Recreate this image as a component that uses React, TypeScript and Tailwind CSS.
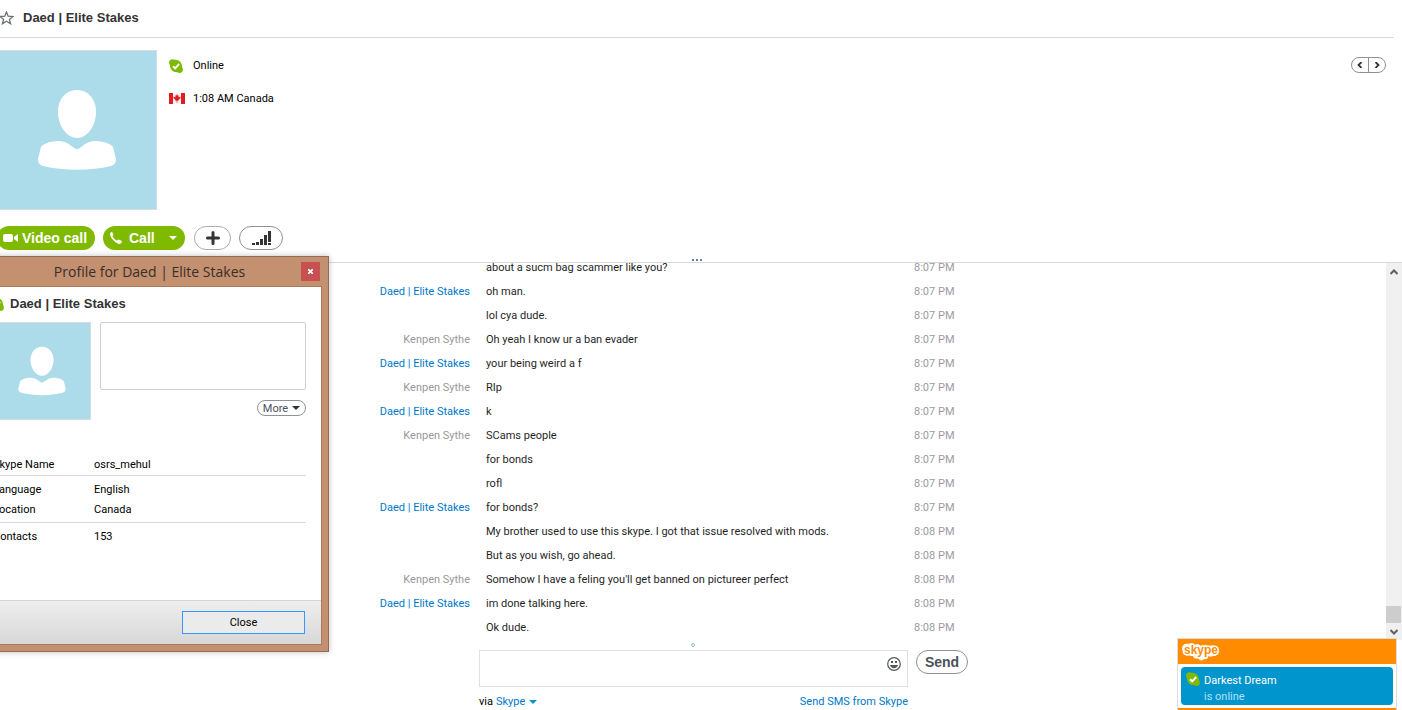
const messages = [
  { from: "", text: "about a sucm bag scammer like you?", time: "8:07 PM" },
  { from: "Daed | Elite Stakes", text: "oh man.", time: "8:07 PM" },
  { from: "", text: "lol cya dude.", time: "8:07 PM" },
  { from: "Kenpen Sythe", text: "Oh yeah I know ur a ban evader", time: "8:07 PM" },
  { from: "Daed | Elite Stakes", text: "your being weird a f", time: "8:07 PM" },
  { from: "Kenpen Sythe", text: "RIp", time: "8:07 PM" },
  { from: "Daed | Elite Stakes", text: "k", time: "8:07 PM" },
  { from: "Kenpen Sythe", text: "SCams people", time: "8:07 PM" },
  { from: "", text: "for bonds", time: "8:07 PM" },
  { from: "", text: "rofl", time: "8:07 PM" },
  { from: "Daed | Elite Stakes", text: "for bonds?", time: "8:07 PM" },
  { from: "", text: "My brother used to use this skype. I got that issue resolved with mods.", time: "8:08 PM" },
  { from: "", text: "But as you wish, go ahead.", time: "8:08 PM" },
  { from: "Kenpen Sythe", text: "Somehow I have a feling you'll get banned on pictureer perfect", time: "8:08 PM" },
  { from: "Daed | Elite Stakes", text: "im done talking here.", time: "8:08 PM" },
  { from: "", text: "Ok dude.", time: "8:08 PM" },
];

const StatusIcon = () => (
  <svg width="14" height="14" viewBox="0 0 14 14" className="shrink-0" aria-hidden="true">
    <path
      d="M0 3.600C0 1.600 1.500.2 3.600.2 4.400.2 5 .4 5.600.8 9.800.4 13.300 3.600 13 8c.9 1 1.100 2.300.9 3.200-.3 1.700-1.700 2.700-3.300 2.700-.8 0-1.500-.3-2.100-.7C4 13.700.8 10.400 1 6.200.4 5.500 0 4.600 0 3.600z"
      fill="#7fba00"
    />
    <path d="M4 7.200l2.200 2.100 4-4.300" fill="none" stroke="#fff" strokeWidth="1.900" />
  </svg>
);

const Avatar = ({ className }: { className: string }) => (
  <div className={`shrink-0 border border-[#d5dde0] bg-[#acdcea] ${className}`}>
    <svg viewBox="0 0 158 158" className="w-full h-full" role="img" aria-label="Contact picture">
      <path
        d="M79 39c11 0 19 9 19 22 0 14-9 26-19 26S60 75 60 61c0-13 8-22 19-22z"
        fill="#fff"
      />
      <path
        d="M79 98c4 0 8-8 19-8 9 0 16 4 17 6l3 12c0 4-2 6-5 7-21 5-47 5-68 0-3-1-5-3-5-7l3-12c1-2 8-6 17-6 11 0 15 8 19 8z"
        fill="#fff"
      />
    </svg>
  </div>
);

const Caret = ({ className = "" }: { className?: string }) => (
  <svg width="8" height="4" viewBox="0 0 8 4" className={className} aria-hidden="true">
    <path d="M0 0h8L4 4z" fill="currentColor" />
  </svg>
);

const Header = () => (
  <header className="mr-2 flex h-[38px] items-center gap-[9px] border-b border-[#d9d9d9] pb-[2px]">
    <button aria-label="Add to favorites">
      <svg width="15" height="14" viewBox="0 0 15 14" className="-ml-px block" aria-hidden="true">
        <path
          d="M7.500 1l1.700 4.200 4.800.3-3.600 2.900 1.200 4.400-4.100-2.500-4.100 2.500 1.200-4.400L1 5.500l4.800-.3z"
          fill="none"
          stroke="#6f7276"
          strokeWidth="1.300"
        />
      </svg>
    </button>
    <h1 className="font-['Liberation_Sans',sans-serif] text-[13px] leading-4 font-bold text-[#333]">
      Daed | Elite Stakes
    </h1>
  </header>
);

const ContactInfo = () => (
  <section className="-ml-[3px] flex items-start pt-3">
    <Avatar className="h-[160px] w-[160px]" />
    <div className="ml-3 flex flex-col gap-4 pt-[7px]">
      <p className="flex items-center gap-[10px]">
        <StatusIcon />
        Online
      </p>
      <p className="flex items-center gap-2">
        <svg width="16" height="11" viewBox="0 0 16 11" aria-hidden="true">
          <path d="M0 0h16v11H0z" fill="#f4f4f4" />
          <path d="M0 0h4v11H0zM12 0h4v11h-4z" fill="#e31b23" />
          <path
            d="M8 1l.9 1.700.9-.4-.3 2.100 1.700-.9.3 1.400-2 2 .1.900H8.300V10h-.6V7.800H6.400l.1-.9-2-2 .3-1.400 1.700.9-.3-2.100.9.4z"
            fill="#e31b23"
          />
        </svg>
        1:08 AM Canada
      </p>
    </div>
    <div className="mt-[7px] mr-4 ml-auto flex h-4 w-[35px] rounded-full border border-[#8d9297] text-[#333]">
      <button aria-label="Previous" className="flex flex-1 items-center justify-center border-r border-[#8d9297]">
        <svg width="6" height="6" viewBox="0 0 6 6" aria-hidden="true">
          <path d="M4.500 0L1.500 3l3 3" fill="none" stroke="currentColor" strokeWidth="1.800" />
        </svg>
      </button>
      <button aria-label="Next" className="flex flex-1 items-center justify-center">
        <svg width="6" height="6" viewBox="0 0 6 6" aria-hidden="true">
          <path d="M1.500 0l3 3-3 3" fill="none" stroke="currentColor" strokeWidth="1.800" />
        </svg>
      </button>
    </div>
  </section>
);

const CallBar = () => (
  <div className="-ml-[3px] flex h-[52px] items-start gap-2 pt-4 font-['Liberation_Sans',sans-serif] text-[14px] leading-4 font-bold text-white">
    <button className="flex h-6 w-[98px] items-center gap-1 rounded-full bg-[#7fba00] pl-[6px] whitespace-nowrap">
      <svg width="15" height="8" viewBox="0 0 15 8" className="shrink-0" aria-hidden="true">
        <rect width="10" height="8" rx="2" fill="#fff" />
        <path d="M11 3l4-3v8l-4-3z" fill="#fff" />
      </svg>
      Video call
    </button>
    <button className="flex h-6 w-[82px] items-center rounded-full bg-[#7fba00] pl-[7px]">
      <svg width="12" height="12" viewBox="0 0 12 12" className="mr-[7px]" aria-hidden="true">
        <path
          d="M0 1.500C0 .8.900 0 1.900 0c.6 0 1.700 2.600 1.500 3.100-.1.400-.8.900-.8 1.200 0 .8 3.200 4.200 4.300 4.200.4 0 .9-.9 1.400-.9.600 0 3.600 1.400 3.600 2 0 1-.9 2.300-2.200 2.300C6.500 11.900 0 6.500 0 1.500z"
          fill="#fff"
        />
      </svg>
      Call
      <Caret className="ml-[14px]" />
    </button>
    <button
      aria-label="Add people"
      className="ml-px flex h-6 w-[37px] items-center justify-center rounded-full border border-[#a9adb1]"
    >
      <svg width="14" height="14" viewBox="0 0 14 14" aria-hidden="true">
        <path d="M7 1.500v11M1.500 7h11" stroke="#333438" strokeWidth="3" strokeLinecap="round" />
      </svg>
    </button>
    <button
      aria-label="Call quality"
      className="flex h-6 w-11 items-center justify-center rounded-full border border-[#8d9297]"
    >
      <svg width="19" height="14" viewBox="0 0 19 14" aria-hidden="true">
        <path
          d="M0 12h3v2H0zM4 11h3v3H4zM8 8h3v6H8zM12 4h3v10h-3zM16 0h3v11h-3zM16 12h3v2h-3z"
          fill="#333438"
        />
      </svg>
    </button>
  </div>
);

const ScrollBar = () => (
  <div className="flex w-4 shrink-0 flex-col bg-[#f0f0f0] text-[#606060]">
    <button aria-label="Scroll up" className="flex h-[17px] items-center justify-center">
      <svg width="8" height="6" viewBox="0 0 8 6" aria-hidden="true">
        <path d="M.5 5L4 1.500 7.500 5" fill="none" stroke="currentColor" strokeWidth="2" />
      </svg>
    </button>
    <div className="mt-auto mr-px h-[17px] bg-[#cdcdcd]" />
    <button aria-label="Scroll down" className="flex h-[17px] items-center justify-center">
      <svg width="8" height="6" viewBox="0 0 8 6" aria-hidden="true">
        <path d="M.5 1L4 4.500 7.500 1" fill="none" stroke="currentColor" strokeWidth="2" />
      </svg>
    </button>
  </div>
);

const ChatLog = () => (
  <section className="relative flex border-t border-[#d9d9d9]">
    <div className="absolute -top-1 left-[692px] flex gap-[2px]">
      <span className="h-[2px] w-[2px] bg-[#5f7fae]" />
      <span className="h-[2px] w-[2px] bg-[#5f7fae]" />
      <span className="h-[2px] w-[2px] bg-[#5f7fae]" />
    </div>
    <div className="flex-1 overflow-hidden">
      <ul className="-mt-[7px]">
        {messages.map((item, idx) => (
          <li
            key={idx}
            className="grid h-6 grid-cols-[470px_minmax(0,412px)_1fr] items-center gap-x-4 leading-4"
          >
            <span
              className={`text-right ${item.from === "Kenpen Sythe" ? "text-[#999]" : "text-[#0078ca]"}`}
            >
              {item.from}
            </span>
            <span className="whitespace-nowrap text-[#1f1f1f]">{item.text}</span>
            <time className="text-[#9b9ba3]">{item.time}</time>
          </li>
        ))}
      </ul>
    </div>
    <ScrollBar />
  </section>
);

const Composer = () => (
  <form className="flex items-start gap-2 pt-[10px] pl-[479px]">
    <div className="relative w-[429px]">
      <span className="absolute -top-[7px] left-[212px] h-1 w-1 rounded-full border border-[#8fbccb]" />
      <textarea
        aria-label="Message"
        className="block h-[37px] w-full resize-none border border-[#e0e0e0] pr-8 pl-2 outline-none"
      />
      <button type="button" aria-label="Emoticons" className="absolute top-[7px] right-[7px]">
        <svg width="14" height="14" viewBox="0 0 14 14" className="block" aria-hidden="true">
          <circle cx="7" cy="7" r="6.300" fill="none" stroke="#55585c" strokeWidth="1.200" />
          <path d="M4 4h2v2H4zM8 4h2v2H8zM3 8h8c-.3 2-2 3.200-4 3.200S3.300 10 3 8z" fill="#55585c" />
        </svg>
      </button>
      <div className="flex items-center justify-between pt-[6px]">
        <div className="flex items-center gap-[3px]">
          <label htmlFor="via" className="text-black">
            via
          </label>
          <span className="flex items-center gap-1 text-[#0078ca]">
            <select id="via" className="field-sizing-content appearance-none">
              <option>Skype</option>
            </select>
            <Caret className="text-[#0095cc]" />
          </span>
        </div>
        <a href="#sms" className="text-[#0078ca]">
          Send SMS from Skype
        </a>
      </div>
    </div>
    <button
      type="button"
      className="h-6 w-[52px] rounded-full border border-[#8d9297] font-['Liberation_Sans',sans-serif] text-[14px] leading-4 font-bold text-[#4a525a]"
    >
      Send
    </button>
  </form>
);

const ProfileDialog = () => (
  <div
    role="dialog"
    aria-label="Profile for Daed | Elite Stakes"
    className="absolute top-[256px] -left-[30px] w-[359px] border border-[#8f6d56] bg-[#c39070] px-[6px] pb-[6px] shadow-[0_0_6px_rgba(0,0,0,0.25)]"
  >
    <div className="relative flex h-[29px] items-center justify-center">
      <h2 className="font-['Open_Sans',sans-serif] text-[14px] leading-4 text-[#3a2e27]">
        Profile for Daed | Elite Stakes
      </h2>
      <button
        aria-label="Close window"
        className="absolute top-[5px] right-[2px] flex h-[19px] w-[19px] items-center justify-center bg-[#c75050]"
      >
        <svg width="5" height="5" viewBox="0 0 5 5" aria-hidden="true">
          <path d="M0 0l5 5M5 0L0 5" stroke="#fff" strokeWidth="1.600" />
        </svg>
      </button>
    </div>
    <div className="border border-[#a87a5e] bg-white">
      <div className="px-[15px] pt-[9px]">
        <div className="-ml-[3px] flex h-4 items-center gap-[6px]">
          <StatusIcon />
          <h3 className="font-['Liberation_Sans',sans-serif] text-[13px] leading-4 font-bold text-[#333]">
            Daed | Elite Stakes
          </h3>
        </div>
        <div className="mt-[10px] flex items-start justify-between">
          <Avatar className="h-[98px] w-[98px]" />
          <div className="flex flex-col items-end">
            <textarea
              aria-label="Mood message"
              className="block h-[68px] w-[206px] resize-none rounded-xs border border-[#d0d0d0]"
            />
            <button className="mt-[10px] flex h-4 w-[49px] items-center justify-center gap-1 rounded-full border border-[#8d9297] text-[#4a525a]">
              More
              <Caret className="text-[#333]" />
            </button>
          </div>
        </div>
        <dl className="mt-[30px] grid grid-cols-[101px_1fr] pb-[53px] leading-5">
          <dt className="border-b border-[#d9d9d9] pt-[5px]">Skype Name</dt>
          <dd className="border-b border-[#d9d9d9] pt-[5px]">osrs_mehul</dd>
          <dt className="pt-1">Language</dt>
          <dd className="pt-1">English</dd>
          <dt className="border-b border-[#d9d9d9] pb-[2px]">Location</dt>
          <dd className="border-b border-[#d9d9d9] pb-[2px]">Canada</dd>
          <dt className="pt-1">Contacts</dt>
          <dd className="pt-1">153</dd>
        </dl>
      </div>
      <div className="flex h-[44px] items-center justify-end border-t border-[#d5d5d5] bg-linear-to-b from-[#eeeeee] to-[#d8d8d8] px-4">
        <button className="h-[23px] w-[123px] border border-[#3399ff] bg-[#ebebeb]">
          Close
        </button>
      </div>
    </div>
  </div>
);

const Toast = () => (
  <div className="fixed right-[5px] bottom-0 w-[220px] border border-b-0 border-[#dcdcdc] bg-white">
    <div className="flex h-[25px] items-center bg-[#ff8c00] pl-1">
      <svg width="38" height="18" viewBox="0 0 38 18" role="img" aria-label="skype">
        <path
          d="M0 6C0 2 3 0 6 1c2-1 4-1 6 1 3-1 5-1 7 1 3-1 5-1 7 0 4-1 10-1 10 5 0 3-2 5-5 5-2 1-3 1-5 0 0 2-1 4-4 3-1 2-5 2-6-1-2 1-4 1-5-2-2 0-3 0-4-1-3 1-7-1-6-4C0 7 0 7 0 6z"
          fill="#fff"
        />
        <text
          x="2"
          y="11"
          fill="#ff8c00"
          stroke="#fff"
          strokeWidth="3"
          strokeLinejoin="round"
          paintOrder="stroke"
          className="font-['Liberation_Sans',sans-serif] text-[12px] font-bold"
        >
          skype
        </text>
      </svg>
    </div>
    <div className="m-[3px] flex h-[38px] items-start gap-1 rounded bg-[#0095cc] pt-[5px] pl-[5px] text-white">
      <StatusIcon />
      <div className="leading-4">
        <p className="pt-px">Darkest Dream</p>
        <p className="text-[#b5e0f5]">is online</p>
      </div>
    </div>
    <div className="h-[2px] bg-[#ff8c00]" />
  </div>
);

export default function App() {
  return (
    <div className="relative min-h-screen overflow-hidden bg-white font-['Roboto',sans-serif] text-[11px] leading-[17px] text-black">
      <Header />
      <ContactInfo />
      <CallBar />
      <ChatLog />
      <Composer />
      <ProfileDialog />
      <Toast />
    </div>
  );
}
